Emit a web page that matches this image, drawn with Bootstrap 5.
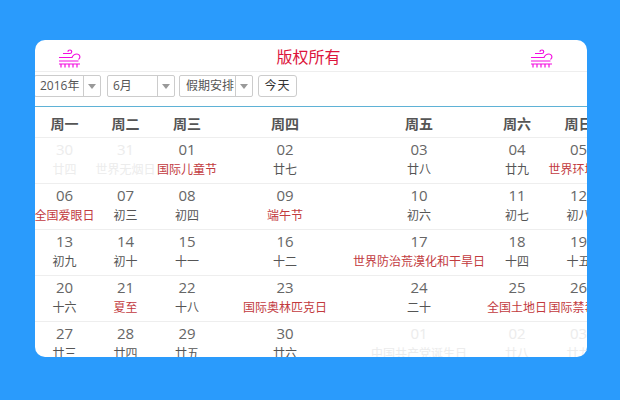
<!DOCTYPE html>
<html lang="zh">
<head>
<meta charset="utf-8">
<title>日历</title>
<link rel="stylesheet" href="https://cdn.jsdelivr.net/npm/bootstrap@5.3.0/dist/css/bootstrap.min.css">
<style>
html,body{height:100%}
body{background:#2a9bfc;font-family:"Open Sans","Noto Sans CJK SC",sans-serif;color:#555;overflow:hidden;padding:40px 33px 43px 35px}
.cal-panel{height:317px;background:#fff;border-radius:10px;overflow:hidden}
.cal-head{height:32px;border-bottom:1px solid #eee;padding:0 33px 0 23px}
.cal-icon{margin-top:6px;flex:none}
.cal-title{font-size:16px;color:#dc143c;line-height:32px;padding-top:2px;padding-left:5px}
.cal-tools{height:35px;padding-top:3px;border-bottom:1px solid #5fb2d6;gap:6px}
.fake-select{height:22px;border:1px solid #ccc;border-radius:2px;font-size:12px;line-height:20px;color:#555;background:#fff;white-space:nowrap}
.fake-select .sel-text{flex:1 1 auto;overflow:hidden}
.fake-select .sel-arrow{width:17px;border-left:1px solid #ccc;flex:none;position:relative}
.fake-select .sel-arrow::after{content:"";position:absolute;left:4px;top:8px;border:4px solid transparent;border-top:5px solid #999;border-bottom:0}
.sel-year{width:67px;margin-left:-1px}.sel-year .sel-text{padding-left:5px}
.sel-month{width:68px}.sel-month .sel-text{padding-left:5px}
.sel-hol{width:74px;margin-left:-2px}.sel-hol .sel-text{padding-left:6px}
.today-btn{height:22px;width:39px;padding:0;font-size:12px;line-height:20px;border:1px solid #ccc;border-radius:3px;background:#fff;color:#333;margin-left:-1px;letter-spacing:1px}
.cal-table{table-layout:fixed;width:575px;margin:0 0 0 -1px;border-collapse:collapse}
.cal-table th,.cal-table td{padding:0;text-align:center;border:0;color:#555;white-space:nowrap;overflow:visible}
.cal-table th{height:30px;padding-top:4px;font-size:14px;font-weight:700;color:#555;border-bottom:1px solid #eee}
.cal-table td{height:46px;border-bottom:1px solid #eee;vertical-align:top}
.w-a{width:61px}.w-b{width:61px}.w-c{width:62px}.w-d{width:134px}
.cal-day{display:block;font-size:15px;line-height:20px;margin-top:1px;padding-bottom:1px;color:#666}
.cal-sub{display:block;font-size:12px;line-height:20px;color:#555}
.cal-sub.hol{color:#c23a3e}
.cal-off .cal-day,.cal-off .cal-sub{color:#ececec}
</style>
</head>
<body>
<div class="cal-panel">
  <div class="cal-head d-flex align-items-center">
    <svg class="cal-icon" width="24" height="20" viewBox="0 0 24 20" fill="none" stroke="#f30ce0" stroke-width="1.2"><path d="M5 4.500h7c2 0 2.500-3.500 0-3.500-1.500 0-2 1-2 1.700"/><path d="M1 8.500h13c1-2.500 3-3.500 5-3.500 3 0 4 4 1.500 5.500"/><path d="M1 12h19.500"/><path d="M1 15h21"/><path d="M3 15v3.500M7 15v3.500M11 15v3.500M15 15v3.500M19 15v3.500"/></svg>
    <div class="cal-title flex-grow-1 text-center">版权所有</div>
    <svg class="cal-icon" width="24" height="20" viewBox="0 0 24 20" fill="none" stroke="#f30ce0" stroke-width="1.2"><path d="M5 4.500h7c2 0 2.500-3.500 0-3.500-1.500 0-2 1-2 1.700"/><path d="M1 8.500h13c1-2.500 3-3.500 5-3.500 3 0 4 4 1.500 5.500"/><path d="M1 12h19.500"/><path d="M1 15h21"/><path d="M3 15v3.500M7 15v3.500M11 15v3.500M15 15v3.500M19 15v3.500"/></svg>
  </div>
  <div class="cal-tools d-flex">
    <div class="fake-select sel-year d-flex"><span class="sel-text">2016年</span><span class="sel-arrow"></span></div>
    <div class="fake-select sel-month d-flex"><span class="sel-text">6月</span><span class="sel-arrow"></span></div>
    <div class="fake-select sel-hol d-flex"><span class="sel-text">假期安排</span><span class="sel-arrow"></span></div>
    <button type="button" class="btn today-btn">今天</button>
  </div>
  <table class="cal-table">
    <thead><tr><th class="w-a">周一</th><th class="w-b">周二</th><th class="w-c">周三</th><th class="w-d">周四</th><th class="w-d">周五</th><th class="w-c">周六</th><th class="w-b">周日</th></tr></thead>
    <tbody>
      <tr>
        <td class="cal-off"><span class="cal-day">30</span><span class="cal-sub">廿四</span></td>
        <td class="cal-off"><span class="cal-day">31</span><span class="cal-sub">世界无烟日</span></td>
        <td><span class="cal-day">01</span><span class="cal-sub hol">国际儿童节</span></td>
        <td><span class="cal-day">02</span><span class="cal-sub">廿七</span></td>
        <td><span class="cal-day">03</span><span class="cal-sub">廿八</span></td>
        <td><span class="cal-day">04</span><span class="cal-sub">廿九</span></td>
        <td><span class="cal-day">05</span><span class="cal-sub hol">世界环境日</span></td>
      </tr>
      <tr>
        <td><span class="cal-day">06</span><span class="cal-sub hol">全国爱眼日</span></td>
        <td><span class="cal-day">07</span><span class="cal-sub">初三</span></td>
        <td><span class="cal-day">08</span><span class="cal-sub">初四</span></td>
        <td><span class="cal-day">09</span><span class="cal-sub hol">端午节</span></td>
        <td><span class="cal-day">10</span><span class="cal-sub">初六</span></td>
        <td><span class="cal-day">11</span><span class="cal-sub">初七</span></td>
        <td><span class="cal-day">12</span><span class="cal-sub">初八</span></td>
      </tr>
      <tr>
        <td><span class="cal-day">13</span><span class="cal-sub">初九</span></td>
        <td><span class="cal-day">14</span><span class="cal-sub">初十</span></td>
        <td><span class="cal-day">15</span><span class="cal-sub">十一</span></td>
        <td><span class="cal-day">16</span><span class="cal-sub">十二</span></td>
        <td><span class="cal-day">17</span><span class="cal-sub hol">世界防治荒漠化和干旱日</span></td>
        <td><span class="cal-day">18</span><span class="cal-sub">十四</span></td>
        <td><span class="cal-day">19</span><span class="cal-sub">十五</span></td>
      </tr>
      <tr>
        <td><span class="cal-day">20</span><span class="cal-sub">十六</span></td>
        <td><span class="cal-day">21</span><span class="cal-sub hol">夏至</span></td>
        <td><span class="cal-day">22</span><span class="cal-sub">十八</span></td>
        <td><span class="cal-day">23</span><span class="cal-sub hol">国际奥林匹克日</span></td>
        <td><span class="cal-day">24</span><span class="cal-sub">二十</span></td>
        <td><span class="cal-day">25</span><span class="cal-sub hol">全国土地日</span></td>
        <td><span class="cal-day">26</span><span class="cal-sub hol">国际禁毒日</span></td>
      </tr>
      <tr>
        <td><span class="cal-day">27</span><span class="cal-sub">廿三</span></td>
        <td><span class="cal-day">28</span><span class="cal-sub">廿四</span></td>
        <td><span class="cal-day">29</span><span class="cal-sub">廿五</span></td>
        <td><span class="cal-day">30</span><span class="cal-sub">廿六</span></td>
        <td class="cal-off"><span class="cal-day">01</span><span class="cal-sub">中国共产党诞生日</span></td>
        <td class="cal-off"><span class="cal-day">02</span><span class="cal-sub">廿八</span></td>
        <td class="cal-off"><span class="cal-day">03</span><span class="cal-sub">廿九</span></td>
      </tr>
    </tbody>
  </table>
</div>
<script src="https://cdn.jsdelivr.net/npm/bootstrap@5.3.0/dist/js/bootstrap.bundle.min.js"></script>
</body>
</html>
